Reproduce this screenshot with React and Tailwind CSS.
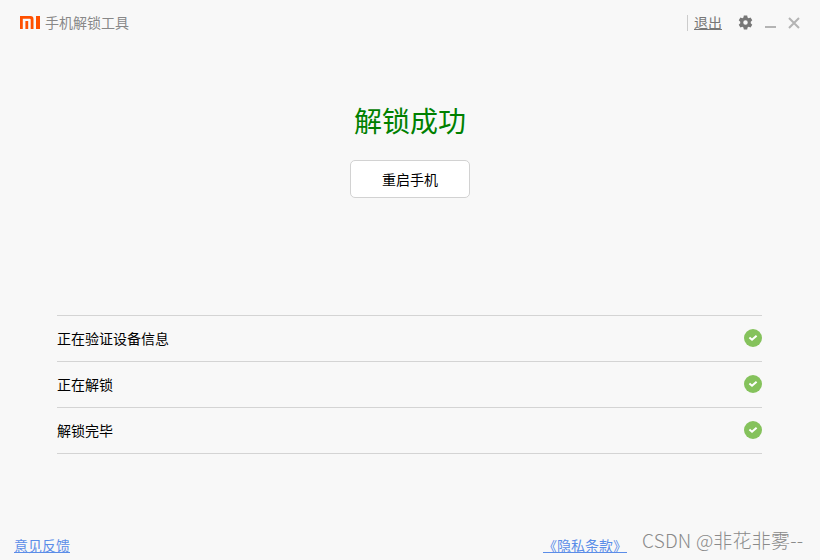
import React from "react";

const font = "font-['Noto_Sans_CJK_SC','Liberation_Sans',sans-serif]";

const MiLogo = () => (
  <svg width="20" height="13" viewBox="0 0 20 13" fill="#ff5000">
    <path d="M0 0h10.5a3 3 0 0 1 3 3v10h-2.8V3.8a1 1 0 0 0-1-1H2.8V13H0z" />
    <rect x="5.4" y="5" width="2.8" height="8" />
    <rect x="16" y="0" width="4" height="13" />
  </svg>
);

const Gear = () => (
  <svg width="15" height="15" viewBox="0 0 16 16">
    <path
      fill="#777"
      fillRule="evenodd"
      d="M6.2 .6h3.6l.4 2.1 1.2.7 2-.7 1.8 3-1.6 1.4v1.8l1.6 1.4-1.8 3-2-.7-1.2.7-.4 2.1H6.2l-.4-2.1-1.2-.7-2 .7-1.8-3 1.6-1.4V7.1L.8 5.7l1.8-3 2 .7 1.2-.7zM8 5.6a2.4 2.4 0 1 0 0 4.8 2.4 2.4 0 0 0 0-4.8z"
    />
  </svg>
);

const Check = () => (
  <svg className="mb-[2px]" width="18" height="18" viewBox="0 0 18 18">
    <circle cx="9" cy="9" r="9" fill="#85c25c" />
    <path d="M5.4 8.6 8 10.8l4.6-4" fill="none" stroke="#fff" strokeWidth="2" />
  </svg>
);

const steps = ["正在验证设备信息", "正在解锁", "解锁完毕"];

export default function App() {
  return (
    <div className={`relative flex h-[560px] w-[820px] flex-col overflow-hidden bg-[#f8f8f8] ${font}`}>
      <header className="flex h-[45px] shrink-0 items-center justify-between pl-5 pr-[20px]">
        <div className="flex items-center gap-[5px]">
          <MiLogo />
          <span className="text-[14px] text-[#888]">手机解锁工具</span>
        </div>
        <div className="flex items-center">
          <span className="h-[16px] border-l border-[#ccc]" />
          <a className="ml-[6px] text-[14px] text-[#777] underline">退出</a>
          <span className="ml-[16px] flex"><Gear /></span>
          <span className="ml-[12px] mt-[9px] h-[2px] w-[11px] bg-[#b4b4b4]" />
          <svg className="ml-[12px]" width="12" height="12" viewBox="0 0 12 12">
            <path d="M1 1l10 10M11 1 1 11" stroke="#b4b4b4" strokeWidth="2" />
          </svg>
        </div>
      </header>

      <main className="flex flex-col items-center">
        <h1 className="mt-[55px] text-[28px] leading-[40px] text-[#008000]">解锁成功</h1>
        <button className="mt-[20px] h-[38px] w-[120px] rounded-[5px] border border-[#d2d2d2] bg-white text-[14px] text-black">
          重启手机
        </button>
      </main>

      <ul className="mx-[57px] mt-[117px] w-[705px] border-t border-[#d4d4d4]">
        {steps.map((s) => (
          <li key={s} className="flex h-[46px] items-center justify-between border-b border-[#d4d4d4] text-[14px] text-black">
            <span>{s}</span>
            <Check />
          </li>
        ))}
      </ul>

      <footer className="mt-auto flex h-[30px] items-center justify-between pl-[14px] pr-[193px] text-[14px] text-[#5b8de8]">
        <a className="underline">意见反馈</a>
        <a className="underline">《隐私条款》</a>
      </footer>

      <span className="absolute left-[642px] top-[528px] text-[19px] font-light leading-[24px] tracking-[0.2px] text-[#8a8a8a]">
        CSDN @非花非雾--
      </span>
    </div>
  );
}
